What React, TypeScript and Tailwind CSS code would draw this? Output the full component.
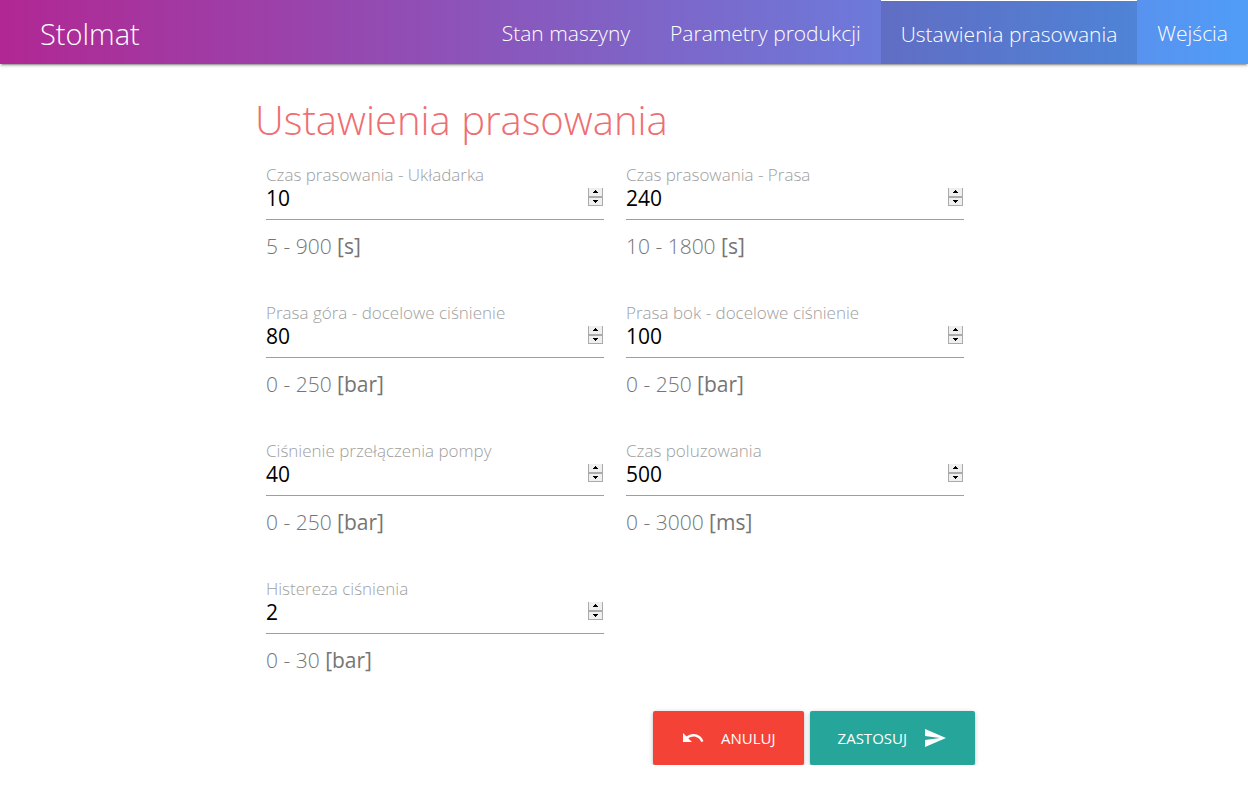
import { useState } from "react";

type Field = { id: string; label: string; value: number; min: number; max: number; unit: string };

const fields: Field[] = [
  { id: "stacker", label: "Czas prasowania - Układarka", value: 10, min: 5, max: 900, unit: "s" },
  { id: "press", label: "Czas prasowania - Prasa", value: 240, min: 10, max: 1800, unit: "s" },
  { id: "top", label: "Prasa góra - docelowe ciśnienie", value: 80, min: 0, max: 250, unit: "bar" },
  { id: "side", label: "Prasa bok - docelowe ciśnienie", value: 100, min: 0, max: 250, unit: "bar" },
  { id: "pump", label: "Ciśnienie przełączenia pompy", value: 40, min: 0, max: 250, unit: "bar" },
  { id: "release", label: "Czas poluzowania", value: 500, min: 0, max: 3000, unit: "ms" },
  { id: "hysteresis", label: "Histereza ciśnienia", value: 2, min: 0, max: 30, unit: "bar" },
];

const links = ["Stan maszyny", "Parametry produkcji", "Ustawienia prasowania", "Wejścia"];
const active = "Ustawienia prasowania";

function NumberField({ field }: { field: Field }) {
  const [value, setValue] = useState(String(field.value));
  const step = (by: number) =>
    setValue(String(Math.min(field.max, Math.max(field.min, Number(value) + by))));

  return (
    <div className="px-[11px] pb-[42px]">
      <label htmlFor={field.id} className="block text-[17px] leading-5 font-light text-[#9e9e9e]">
        {field.label}
      </label>
      <div className="flex h-[35px] items-start border-b border-[#9e9e9e]">
        <input
          id={field.id}
          type="number"
          min={field.min}
          max={field.max}
          value={value}
          onChange={(e) => setValue(e.target.value)}
          className="h-[27px] min-w-0 flex-1 bg-transparent text-[21px] text-black outline-none [appearance:textfield] [&::-webkit-inner-spin-button]:appearance-none"
        />
        <div className="mt-[3px] mr-px flex h-[18px] w-[15px] flex-col border border-t-0 border-[#ababab] bg-[#efefef]">
          <button type="button" aria-label="+" onClick={() => step(1)} className="flex flex-1 items-center justify-center border-b-2 border-[#ababab]">
            <svg width="5" height="3" viewBox="0 0 5 3" shapeRendering="crispEdges"><path d="M2 0h1v1h1v1h1v1H0V2h1V1h1z" /></svg>
          </button>
          <button type="button" aria-label="-" onClick={() => step(-1)} className="flex flex-1 items-center justify-center">
            <svg width="5" height="3" viewBox="0 0 5 3" shapeRendering="crispEdges"><path d="M0 0h5v1H4v1H3v1H2V2H1V1H0z" /></svg>
          </button>
        </div>
      </div>
      <p className="pt-[11px] text-[21px] leading-[30px] font-light text-[#757575]">
        {field.min} - {field.max} <span className="font-normal">[{field.unit}]</span>
      </p>
    </div>
  );
}

export default function App() {
  return (
    <div className="bg-white font-['Open_Sans','Noto_Sans',sans-serif] text-black">
      <nav className="flex h-16 items-stretch justify-between bg-[linear-gradient(90deg,#b12793,#4f9df8)] font-light text-white shadow-[0_2px_2px_0_rgba(0,0,0,0.14),0_3px_1px_-2px_rgba(0,0,0,0.2),0_1px_5px_0_rgba(0,0,0,0.12)]">
        <a href="#" className="flex items-center pt-1 pl-10 text-[29px]">Stolmat</a>
        <ul className="flex text-[21px]">
          {links.map((link) => (
            <li key={link} className="flex">
              <a
                href="#"
                className={
                  link === active
                    ? "flex items-center border-t border-white bg-black/10 bg-clip-padding px-5 pt-1"
                    : "flex items-center px-5 pt-1"
                }
              >
                {link}
              </a>
            </li>
          ))}
        </ul>
      </nav>
      <main className="pr-[18px]">
        <form className="mx-auto max-w-[720px] pt-[26px]" onSubmit={(e) => e.preventDefault()}>
          <h1 className="text-[40px] leading-[60px] font-light text-[#ee6e73]">Ustawienia prasowania</h1>
          <div className="grid grid-cols-2 pt-[15px]">
            {fields.map((f) => (
              <NumberField key={f.id} field={f} />
            ))}
          </div>
          <div className="-mt-1.5 flex justify-end gap-1.5 text-[15px] text-white">
            <button type="button" className="flex h-[54px] items-center gap-4 rounded-[2px] bg-[#f44336] px-7 shadow-[0_2px_2px_0_rgba(0,0,0,0.14),0_3px_1px_-2px_rgba(0,0,0,0.12),0_1px_5px_0_rgba(0,0,0,0.2)]">
              <svg width="24" height="24" viewBox="0 0 24 24" fill="currentColor"><path d="M12.5 8c-2.65 0-5.05.99-6.9 2.6L2 7v9h9l-3.62-3.62c1.39-1.16 3.16-1.88 5.12-1.88 3.54 0 6.55 2.31 7.6 5.5l2.37-.78C21.08 11.03 17.15 8 12.5 8z" /></svg>
              ANULUJ
            </button>
            <button type="submit" className="flex h-[54px] items-center gap-4 rounded-[2px] bg-[#26a69a] px-7 shadow-[0_2px_2px_0_rgba(0,0,0,0.14),0_3px_1px_-2px_rgba(0,0,0,0.12),0_1px_5px_0_rgba(0,0,0,0.2)]">
              ZASTOSUJ
              <svg width="24" height="24" viewBox="0 0 24 24" fill="currentColor"><path d="M2.01 21L23 12 2.01 3 2 10l15 2-15 2z" /></svg>
            </button>
          </div>
        </form>
      </main>
    </div>
  );
}
